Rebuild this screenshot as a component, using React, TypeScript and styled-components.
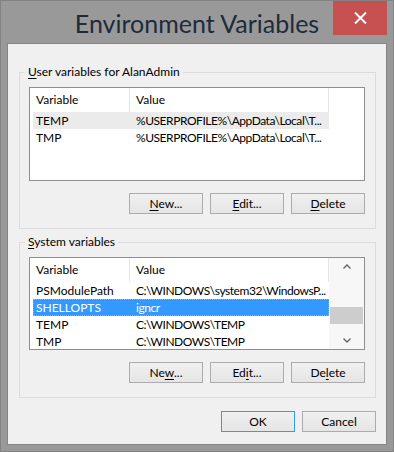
import React from "react";
import styled, { createGlobalStyle, css } from "styled-components";

const GlobalStyle = createGlobalStyle`
  html, body { margin: 0; padding: 0; background: #999999; }
  body { font-family: "Lato", "Liberation Sans", sans-serif; font-size: 12px; color: #000; }
  * { box-sizing: border-box; }
`;

const Frame = styled.div`
  width: 394px;
  height: 452px;
  border: 1px solid #838383;
  background: #999999;
  display: flex;
  flex-direction: column;
`;

const TitleBar = styled.div`
  height: 42px;
  display: grid;
  grid-template-columns: 1fr auto 1fr;
  flex-shrink: 0;
`;

const Title = styled.div`
  grid-column: 2;
  margin-top: 10px;
  font-family: "Lato", "Liberation Sans", sans-serif;
  font-size: 25px;
  line-height: 25px;
  color: #1f2b3b;
  white-space: nowrap;
`;

const CloseButton = styled.div`
  grid-column: 3;
  justify-self: end;
  align-self: start;
  width: 54px;
  height: 34px;
  margin-right: 6px;
  background: #c75050;
  display: flex;
  align-items: center;
  justify-content: center;
`;

const Client = styled.div`
  flex: 1;
  margin: 0 6px 6px;
  border: 1px solid #858585;
  background: #f0f0f0;
  display: flex;
  flex-direction: column;
  padding: 21px 10px 12px 11px;
`;

const Group = styled.fieldset<{ $gap?: number }>`
  margin: ${(p) => p.$gap ?? 0}px 0 0 0;
  padding: 8px 10px 14px 9px;
  border: 1px solid #dcdcdc;
  min-width: 0;
`;

const Legend = styled.legend`
  padding: 0 3px;
  margin-left: -4px;
  line-height: 14px;
  font-size: 12px;
  u {
    text-decoration-thickness: 1px;
    text-underline-offset: 2px;
  }
`;

const ListBox = styled.div<{ $height: number }>`
  height: ${(p) => p.$height}px;
  border: 1px solid #8f8f8f;
  background: #ffffff;
  display: flex;
  overflow: hidden;
`;

const ListBody = styled.div<{ $fixed?: boolean }>`
  ${(p) =>
    p.$fixed
      ? css`
          width: 299px;
          flex-shrink: 0;
        `
      : css`
          flex: 1;
        `}
  display: flex;
  flex-direction: column;
`;

const Header = styled.div`
  height: 24px;
  flex-shrink: 0;
  display: grid;
  grid-template-columns: 100px 199px 1fr;
`;

const HeaderCell = styled.div<{ $last?: boolean }>`
  padding-left: 6px;
  line-height: 24px;
  border-right: ${(p) => (p.$last ? "none" : "1px solid #e5e5e5")};
  white-space: nowrap;
  overflow: hidden;
`;

type RowState = "normal" | "inactive" | "selected";

const Row = styled.div<{ $state: RowState }>`
  height: 17px;
  width: 296px;
  margin-left: 3px;
  flex-shrink: 0;
  display: grid;
  grid-template-columns: 96px 1fr;
  line-height: 17px;
  ${(p) =>
    p.$state === "inactive" &&
    css`
      background: #ebebeb;
    `}
  ${(p) =>
    p.$state === "selected" &&
    css`
      background: #3399ff;
      color: #ffffff;
      outline: 1px dotted #e09a4a;
      outline-offset: -1px;
    `}
`;

const Cell = styled.div<{ $pad: number; $tight?: boolean }>`
  padding-left: ${(p) => p.$pad}px;
  white-space: nowrap;
  overflow: hidden;
  letter-spacing: ${(p) => (p.$tight ? "-0.45px" : "0")};
`;

const ScrollBar = styled.div`
  width: 35px;
  flex-shrink: 0;
  background: #f7f7f7;
  display: flex;
  flex-direction: column;
`;

const ScrollArrow = styled.div`
  height: 17px;
  flex-shrink: 0;
  display: flex;
  align-items: center;
  justify-content: center;
`;

const Track = styled.div`
  flex: 1;
  display: flex;
  flex-direction: column;
`;

const Thumb = styled.div<{ $top: number }>`
  margin: ${(p) => p.$top}px 1px 0;
  height: 17px;
  background: #cdcdcd;
`;

const ButtonRow = styled.div<{ $gap: number }>`
  display: flex;
  justify-content: flex-end;
  gap: 7px;
  margin-top: ${(p) => p.$gap}px;
`;

const Button = styled.button<{ $primary?: boolean }>`
  width: 74px;
  height: 21px;
  padding: 0;
  border: 1px solid ${(p) => (p.$primary ? "#3399ff" : "#acacac")};
  background: linear-gradient(#f0f0f0, #e5e5e5);
  font-family: inherit;
  font-size: 12px;
  color: #000;
  u {
    text-decoration-thickness: 1px;
    text-underline-offset: 2px;
  }
`;

const Chevron = ({ up }: { up?: boolean }) => (
  <svg width="8" height="5" viewBox="0 0 8 5">
    <polyline
      points={up ? "0.5,4.5 4,1 7.5,4.5" : "0.5,0.5 4,4 7.5,0.5"}
      fill="none"
      stroke="#606060"
      strokeWidth="1.3"
    />
  </svg>
);

type Item = { name: string; value: string; state: RowState };

const userVars: Item[] = [
  { name: "TEMP", value: "%USERPROFILE%\\AppData\\Local\\T...", state: "inactive" },
  { name: "TMP", value: "%USERPROFILE%\\AppData\\Local\\T...", state: "normal" },
];

const sysVars: Item[] = [
  { name: "PSModulePath", value: "C:\\WINDOWS\\system32\\WindowsP...", state: "normal" },
  { name: "SHELLOPTS", value: "igncr", state: "selected" },
  { name: "TEMP", value: "C:\\WINDOWS\\TEMP", state: "normal" },
  { name: "TMP", value: "C:\\WINDOWS\\TEMP", state: "normal" },
];

const VarList = ({ items, height, scroll }: { items: Item[]; height: number; scroll?: boolean }) => (
  <ListBox $height={height}>
    <ListBody $fixed={scroll}>
      <Header>
        <HeaderCell>Variable</HeaderCell>
        <HeaderCell>Value</HeaderCell>
        {!scroll && <HeaderCell $last />}
      </Header>
      {items.map((it, i) => (
        <Row key={i} $state={it.state}>
          <Cell $pad={3}>{it.name}</Cell>
          <Cell $pad={7} $tight>
            {it.value}
          </Cell>
        </Row>
      ))}
    </ListBody>
    {scroll && (
      <ScrollBar>
        <ScrollArrow>
          <Chevron up />
        </ScrollArrow>
        <Track>
          <Thumb $top={32} />
        </Track>
        <ScrollArrow>
          <Chevron />
        </ScrollArrow>
      </ScrollBar>
    )}
  </ListBox>
);

export default function App() {
  return (
    <>
      <GlobalStyle />
      <Frame>
        <TitleBar>
          <Title>Environment Variables</Title>
          <CloseButton>
            <svg width="13" height="12" viewBox="0 0 13 12">
              <path d="M1 0.5 L12 11.5 M12 0.5 L1 11.5" stroke="#ffffff" strokeWidth="2" fill="none" />
            </svg>
          </CloseButton>
        </TitleBar>
        <Client>
          <Group>
            <Legend>
              <u>U</u>ser variables for AlanAdmin
            </Legend>
            <VarList items={userVars} height={94} />
            <ButtonRow $gap={12}>
              <Button>
                <u>N</u>ew...
              </Button>
              <Button>
                <u>E</u>dit...
              </Button>
              <Button>
                <u>D</u>elete
              </Button>
            </ButtonRow>
          </Group>
          <Group $gap={6}>
            <Legend>
              <u>S</u>ystem variables
            </Legend>
            <VarList items={sysVars} height={93} scroll />
            <ButtonRow $gap={12}>
              <Button>
                Ne<u>w</u>...
              </Button>
              <Button>
                Ed<u>i</u>t...
              </Button>
              <Button>
                De<u>l</u>ete
              </Button>
            </ButtonRow>
          </Group>
          <ButtonRow $gap={13}>
            <Button $primary>OK</Button>
            <Button>Cancel</Button>
          </ButtonRow>
        </Client>
      </Frame>
    </>
  );
}
